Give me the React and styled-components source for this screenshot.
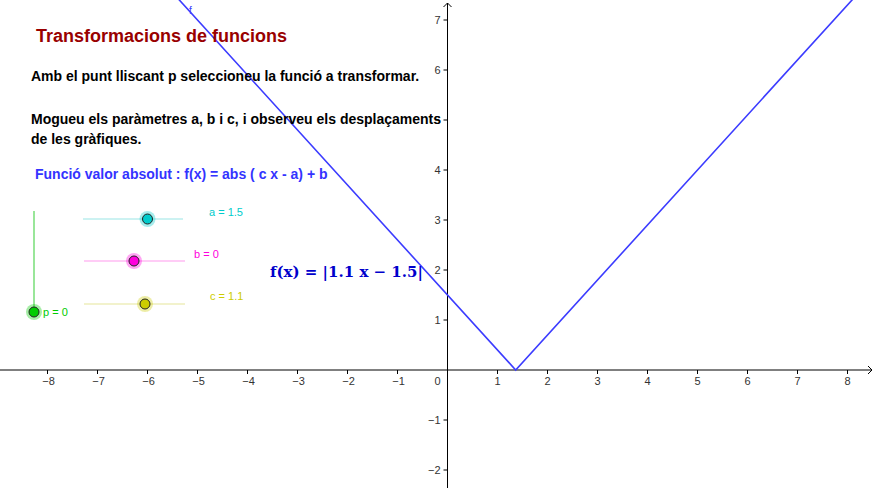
import React from 'react'
import styled, { createGlobalStyle } from 'styled-components'

const GlobalStyle = createGlobalStyle`
  html, body {
    margin: 0;
    padding: 0;
    background: #ffffff;
  }
  body {
    font-family: 'Liberation Sans', Arial, sans-serif;
  }
`

// graph coordinates: 1 unit = 50px
const OX = 447.5
const OY = 370
const U = 50
const W = 874
const H = 488

const px = (x) => OX + x * U
const py = (y) => OY - y * U

const Board = styled.div`
  position: relative;
  width: ${W}px;
  height: ${H}px;
  overflow: hidden;
  background: #fff;
`

const Graph = styled.svg`
  display: block;
  width: ${W}px;
  height: ${H}px;
`

const TextPanel = styled.div`
  position: absolute;
  top: 0;
  left: 0;
  width: 460px;
  display: flex;
  flex-direction: column;
  padding: 25px 0 0 31px;
  box-sizing: border-box;
  pointer-events: none;
`

const Title = styled.h1`
  margin: 0 0 0 5px;
  font-family: 'Liberation Sans', Arial, sans-serif;
  font-size: 18px;
  font-weight: bold;
  color: #990000;
  line-height: 22px;
`

const Para = styled.p`
  margin: ${(p) => p.$top}px 0 0 0;
  font-family: 'Liberation Sans', Arial, sans-serif;
  font-size: 14px;
  font-weight: bold;
  color: #000;
  line-height: 20px;
`

const FuncLine = styled.p`
  margin: 15px 0 0 4px;
  font-family: 'Liberation Sans', Arial, sans-serif;
  font-size: 14px;
  font-weight: bold;
  color: #3333ff;
  line-height: 20px;
`

const Formula = styled.div`
  position: absolute;
  left: 270px;
  top: 263px;
  font-family: 'DejaVu Serif', 'Liberation Serif', serif;
  font-size: 15px;
  font-weight: bold;
  color: #0000cc;
  white-space: nowrap;
`

const sliders = [
  { name: 'a', value: '1.5', y: 219, x1: 83, x2: 183, at: 147.5, color: '#00cccc', line: '#99e6e6', lx: 209, ly: 216 },
  { name: 'b', value: '0', y: 261, x1: 84, x2: 185, at: 134, color: '#ff00dd', line: '#ff99ee', lx: 194, ly: 258 },
  { name: 'c', value: '1.1', y: 304, x1: 84, x2: 185, at: 145, color: '#cccc00', line: '#e6e699', lx: 210, ly: 300 },
]

function Axes() {
  const xs = [-8, -7, -6, -5, -4, -3, -2, -1, 1, 2, 3, 4, 5, 6, 7, 8]
  const ys = [-2, -1, 1, 2, 3, 4, 5, 6, 7]
  const lab = (n) => (n < 0 ? '\u2212' + Math.abs(n) : String(n))
  return (
    <g fontFamily="'Liberation Sans', Arial, sans-serif" fontSize="11" fill="#333">
      <line x1="0" y1={OY} x2={W - 2} y2={OY} stroke="#000" strokeWidth="1" />
      <polyline points={`${W - 6},${OY - 4} ${W - 2},${OY} ${W - 6},${OY + 4}`} fill="none" stroke="#000" />
      <line x1={OX} y1={H} x2={OX} y2="3" stroke="#000" strokeWidth="1" />
      <polyline points={`${OX - 4},7 ${OX},3 ${OX + 4},7`} fill="none" stroke="#000" />
      {xs.map((n) => (
        <g key={'x' + n}>
          <line x1={px(n)} y1={OY} x2={px(n)} y2={OY + 4} stroke="#000" />
          <text x={px(n) + (n < 0 ? 1 : 0)} y={OY + 15} textAnchor="middle">{lab(n)}</text>
        </g>
      ))}
      {ys.map((n) => (
        <g key={'y' + n}>
          <line x1={OX - 4} y1={py(n)} x2={OX} y2={py(n)} stroke="#000" />
          <text x={OX - 7} y={py(n) + 4} textAnchor="end">{lab(n)}</text>
        </g>
      ))}
      <text x={OX - 7} y={OY + 15} textAnchor="end">0</text>
    </g>
  )
}

function SliderPoint({ x, y, color }) {
  return (
    <g>
      <circle cx={x} cy={y} r="8" fill={color} opacity="0.35" />
      <circle cx={x} cy={y} r="5" fill={color} stroke="#222" strokeWidth="1" />
    </g>
  )
}

export default function App() {
  const a = 1.5
  const c = 1.1
  const vx = a / c
  const topY = OY / U + 0.2
  const left = vx - topY / c
  const right = vx + topY / c
  const fPts = `${px(left)},${py(topY)} ${px(vx)},${py(0)} ${px(right)},${py(topY)}`

  return (
    <Board>
      <GlobalStyle />
      <Graph viewBox={`0 0 ${W} ${H}`}>
        <Axes />
        <polyline points={fPts} fill="none" stroke="#3c3cff" strokeWidth="1.6" />
        <text x="189" y="14" fontFamily="'Liberation Sans', Arial, sans-serif" fontSize="10" fill="#3c3cff">f</text>

        {sliders.map((s) => (
          <g key={s.name}>
            <line x1={s.x1} y1={s.y} x2={s.x2} y2={s.y} stroke={s.line} strokeWidth="1.2" />
            <SliderPoint x={s.at} y={s.y} color={s.color} />
            <text x={s.lx} y={s.ly} fontFamily="'Liberation Sans', Arial, sans-serif" fontSize="11" fill={s.color}>
              {s.name} = {s.value}
            </text>
          </g>
        ))}

        <line x1="34" y1="211" x2="34" y2="312" stroke="#99e699" strokeWidth="2" />
        <SliderPoint x={34} y={312} color="#00cc00" />
        <text x="43" y="316" fontFamily="'Liberation Sans', Arial, sans-serif" fontSize="11" fill="#00cc00">p = 0</text>
      </Graph>

      <TextPanel>
        <Title>Transformacions de funcions</Title>
        <Para $top={19}>Amb el punt lliscant p seleccioneu la funció a transformar.</Para>
        <Para $top={23}>
          Mogueu els paràmetres a, b i c, i observeu els desplaçaments
          <br />
          de les gràfiques.
        </Para>
        <FuncLine>Funció valor absolut : f(x) = abs ( c x - a) + b</FuncLine>
      </TextPanel>

      <Formula>f(x) = |1.1 x − 1.5|</Formula>
    </Board>
  )
}
